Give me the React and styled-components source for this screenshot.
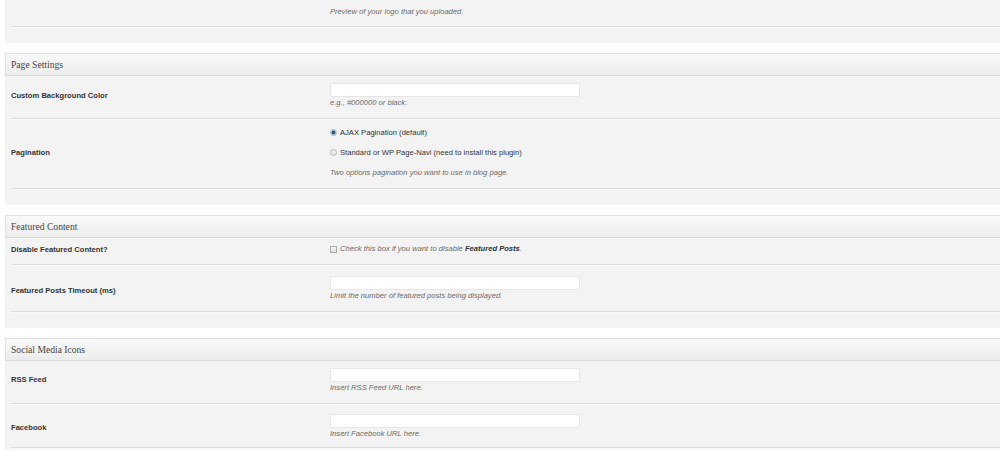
import React from "react";
import styled, { createGlobalStyle } from "styled-components";

const GlobalStyle = createGlobalStyle`
  html, body { margin: 0; padding: 0; background: #ffffff; }
  body { font-family: "Liberation Sans", Arial, sans-serif; color: #333; }
`;

const Page = styled.div`
  padding-left: 5px;
  width: 995px;
`;

const Panel = styled.section`
  background: #f3f3f3;
  padding-bottom: 16px;
  margin-bottom: 10px;
`;

const PanelHeader = styled.div`
  height: 21px;
  display: flex;
  align-items: center;
  padding-left: 5px;
  border: 1px solid #e2e2e2;
  border-right: none;
  border-bottom-color: #d9d9d9;
  background: linear-gradient(to bottom, #f9f9f9, #ececec);
`;

const PanelTitle = styled.h3`
  margin: 0;
  font-family: "Liberation Serif", Georgia, serif;
  font-weight: normal;
  font-size: 9.6px;
  color: #464646;
`;

const Row = styled.div`
  margin-left: 6px;
  display: grid;
  grid-template-columns: 319px 1fr;
  align-items: center;
  padding: ${(p) => p.$pt}px 0 ${(p) => p.$pb}px;
  border-bottom: 1px solid #dcdcdc;
  box-shadow: 0 1px 0 #fafafa;
`;

const Label = styled.div`
  font-size: 7.6px;
  font-weight: bold;
  color: #333;
  margin-top: ${(p) => p.$shift || 0}px;
`;

const Field = styled.div`
  grid-column: 2;
  display: flex;
  flex-direction: column;
  align-items: flex-start;
  gap: ${(p) => p.$gap || 0}px;
`;

const TextInput = styled.div`
  width: 250px;
  height: 14px;
  box-sizing: border-box;
  background: #ffffff;
  border: 1px solid #e6e6e6;
  border-radius: 2px;
`;

const Hint = styled.p`
  margin: 0;
  font-size: 7.6px;
  line-height: ${(p) => p.$lh || 12}px;
  font-style: italic;
  color: #6a6a6a;

  strong {
    color: #333;
  }
`;

const Option = styled.label`
  display: flex;
  align-items: center;
  gap: 3px;
  font-size: 7.6px;
  line-height: 13px;
  color: #333;
`;

const Radio = styled.span`
  width: 7px;
  height: 7px;
  box-sizing: border-box;
  border-radius: 50%;
  border: 1px solid #b5b5b5;
  background: ${(p) =>
    p.$checked
      ? "radial-gradient(circle, #1e5f86 0 1.6px, #7fa3bb 2px, #e8e8e8 2.6px)"
      : "linear-gradient(to bottom, #f7f7f7, #e2e2e2)"};
`;

const CheckBox = styled.span`
  width: 7px;
  height: 7px;
  box-sizing: border-box;
  border: 1px solid #a9a9a9;
  background: linear-gradient(to bottom, #f4f4f4, #e6e6e6);
  flex-shrink: 0;
`;

const CheckLine = styled.div`
  display: flex;
  align-items: center;
  gap: 3px;
`;

export default function App() {
  return (
    <>
      <GlobalStyle />
      <Page>
        <Panel>
          <Row $pt={6} $pb={8}>
            <Field>
              <Hint>Preview of your logo that you uploaded.</Hint>
            </Field>
          </Row>
        </Panel>

        <Panel>
          <PanelHeader>
            <PanelTitle>Page Settings</PanelTitle>
          </PanelHeader>
          <Row $pt={7} $pb={9}>
            <Label $shift={-2}>Custom Background Color</Label>
            <Field>
              <TextInput />
              <Hint>e.g., #000000 or black.</Hint>
            </Field>
          </Row>
          <Row $pt={7} $pb={9}>
            <Label>Pagination</Label>
            <Field $gap={7}>
              <Option>
                <Radio $checked />
                AJAX Pagination (default)
              </Option>
              <Option>
                <Radio />
                Standard or WP Page-Navi (need to install this plugin)
              </Option>
              <Hint $lh={13}>Two options pagination you want to use in blog page.</Hint>
            </Field>
          </Row>
        </Panel>

        <Panel>
          <PanelHeader>
            <PanelTitle>Featured Content</PanelTitle>
          </PanelHeader>
          <Row $pt={5} $pb={9}>
            <Label>Disable Featured Content?</Label>
            <Field>
              <CheckLine>
                <CheckBox />
                <Hint>
                  Check this box if you want to disable <strong>Featured Posts</strong>.
                </Hint>
              </CheckLine>
            </Field>
          </Row>
          <Row $pt={11} $pb={9}>
            <Label $shift={2}>Featured Posts Timeout (ms)</Label>
            <Field>
              <TextInput />
              <Hint>Limit the number of featured posts being displayed.</Hint>
            </Field>
          </Row>
        </Panel>

        <Panel>
          <PanelHeader>
            <PanelTitle>Social Media Icons</PanelTitle>
          </PanelHeader>
          <Row $pt={7} $pb={9}>
            <Label $shift={-3}>RSS Feed</Label>
            <Field>
              <TextInput />
              <Hint>Insert RSS Feed URL here.</Hint>
            </Field>
          </Row>
          <Row $pt={10} $pb={7}>
            <Label>Facebook</Label>
            <Field>
              <TextInput />
              <Hint>Insert Facebook URL here.</Hint>
            </Field>
          </Row>
        </Panel>
      </Page>
    </>
  );
}
